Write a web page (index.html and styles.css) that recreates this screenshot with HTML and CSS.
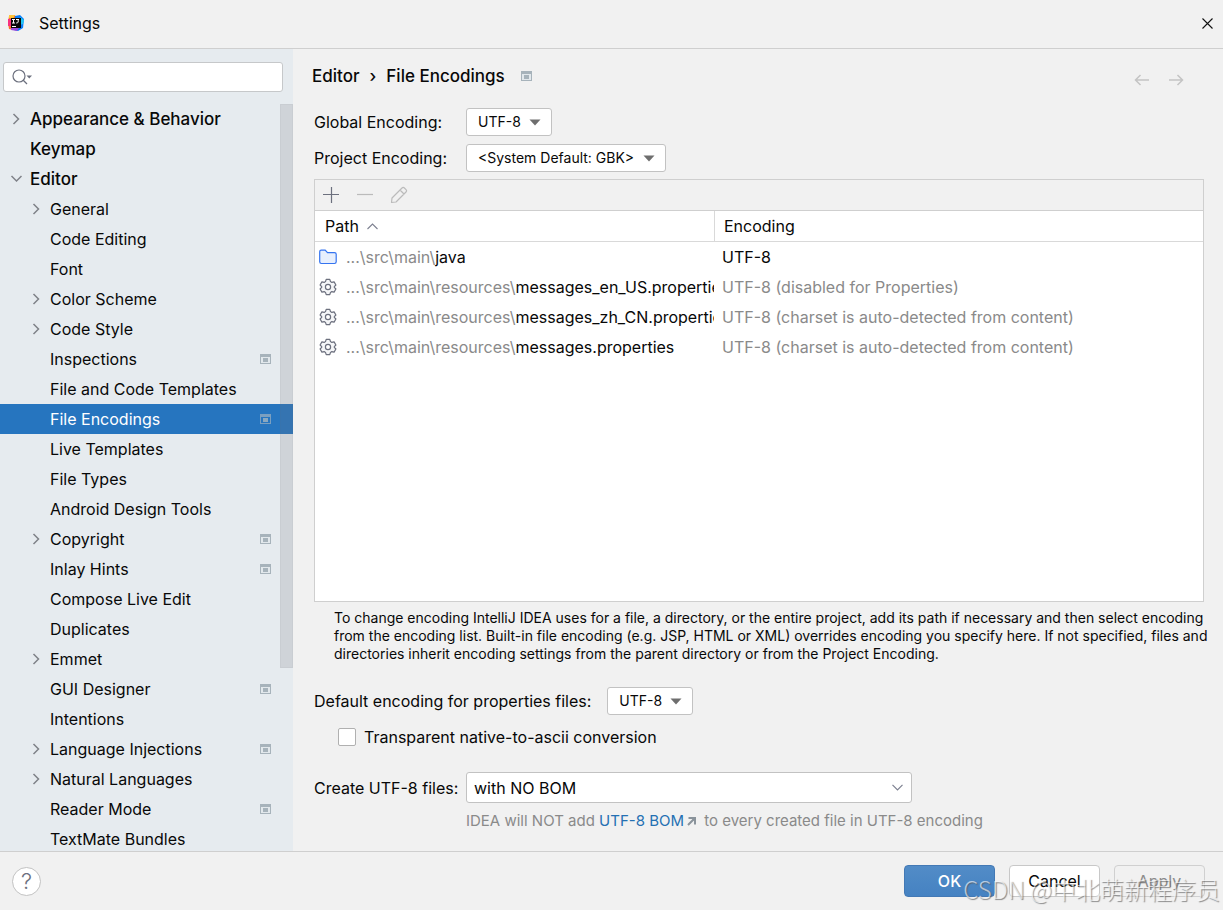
FILE: index.html
```html
<!DOCTYPE html>
<html lang="en">
<head>
<meta charset="utf-8">
<title>Settings</title>
<link rel="stylesheet" href="styles.css">
</head>
<body>
<svg class="sprite" aria-hidden="true">
  <symbol id="chevron-right" viewBox="0 0 12 12"><path d="M3.500 1l5 5-5 5" fill="none" stroke="#7f8288" stroke-width="1.500"/></symbol>
  <symbol id="chevron-down" viewBox="0 0 12 12"><path d="M1.500 3l5 5 5-5" fill="none" stroke="#7f8288" stroke-width="1.500"/></symbol>
  <symbol id="project" viewBox="0 0 11 10"><path d="M0 0h11v10H0z" fill="#a7b3bb"/><path d="M1 3h9v6H1z" fill="#e2e8ec"/><path d="M3 4h5v4H3z" fill="#a7b3bb"/></symbol>
  <symbol id="project-selected" viewBox="0 0 11 10"><path d="M0 0h11v10H0z" fill="#7a9fc0"/><path d="M1 3h9v6H1z" fill="#2675bf"/><path d="M3 4h5v4H3z" fill="#8aa8c0"/></symbol>
  <symbol id="triangle" viewBox="0 0 12 7"><path d="M0.500 0.500h11L6 6.500z" fill="#6e6e6e"/></symbol>
  <symbol id="gear" viewBox="0 0 18 18"><path d="M7.200 1.400h3.600l.7 2.200 1.300.8 2.300-.5 1.800 3.100-1.600 1.700v.6l1.600 1.700-1.800 3.100-2.300-.5-1.300.8-.7 2.200H7.200l-.7-2.200-1.300-.8-2.300.5L1.100 11l1.600-1.700v-.6L1.100 7l1.800-3.100 2.300.5 1.300-.8z" fill="#f5f6f8" stroke="#6c707e" stroke-width="1.200" stroke-linejoin="round"/><circle cx="9" cy="9" r="2.600" fill="#fff" stroke="#6c707e" stroke-width="1.200"/></symbol>
</svg>

<header class="titlebar">
  <svg class="logo" viewBox="0 0 16 16" aria-hidden="true">
    <path d="M1 1l6-1 2 8-4 7-4-1-1-6z" fill="#fc6a2b"/><path d="M1 0h6l-2 4-4-1z" fill="#ffc43a"/><path d="M0 4h4v7H0z" fill="#f8317f"/>
    <path d="M7 1l5-1 4 4-1 9-5 3-4-1z" fill="#087cfa"/><path d="M12 2l4 3-1 4-3 1z" fill="#20c5f5"/><path d="M3 13h8l-2 3-6-1z" fill="#9b48d8"/>
    <path d="M3 3h10v10H3z" fill="#080808"/><path d="M4 4.500h3M5.500 4.500v3.500M4 8h3M8 4.500h3M10.200 4.500v2.500q0 1-2 1M4 11.500h4" fill="none" stroke="#fff"/>
  </svg>
  <h1 class="title">Settings</h1>
  <button class="close" aria-label="Close"><svg width="11" height="11" viewBox="0 0 11 11"><path d="M.5.5l10 10M10.500.5l-10 10" stroke="#111" stroke-width="1.100"/></svg></button>
</header>

<div class="body">
  <aside class="sidebar">
    <label class="search">
      <svg width="22" height="16" viewBox="0 0 22 16"><circle cx="7" cy="7" r="6" fill="none" stroke="#6c707e" stroke-width="1.200"/><path d="M11 11l4 4" stroke="#6c707e" stroke-width="1.300"/><path d="M14.500 6.500h5.500l-2.700 3z" fill="#6c707e"/></svg>
      <input type="text" aria-label="Search settings">
    </label>
    <nav class="tree-area">
      <ul class="tree">
        <li class="row top"><svg class="arrow"><use href="#chevron-right"/></svg><span>Appearance &amp; Behavior</span></li>
        <li class="row top"><i class="arrow"></i><span>Keymap</span></li>
        <li class="row top"><svg class="arrow"><use href="#chevron-down"/></svg><span>Editor</span></li>
        <li class="row"><svg class="arrow"><use href="#chevron-right"/></svg><span>General</span></li>
        <li class="row"><i class="arrow"></i><span>Code Editing</span></li>
        <li class="row"><i class="arrow"></i><span>Font</span></li>
        <li class="row"><svg class="arrow"><use href="#chevron-right"/></svg><span>Color Scheme</span></li>
        <li class="row"><svg class="arrow"><use href="#chevron-right"/></svg><span>Code Style</span></li>
        <li class="row"><i class="arrow"></i><span>Inspections</span><svg class="mark"><use href="#project"/></svg></li>
        <li class="row"><i class="arrow"></i><span>File and Code Templates</span></li>
        <li class="row selected"><i class="arrow"></i><span>File Encodings</span><svg class="mark"><use href="#project-selected"/></svg></li>
        <li class="row"><i class="arrow"></i><span>Live Templates</span></li>
        <li class="row"><i class="arrow"></i><span>File Types</span></li>
        <li class="row"><i class="arrow"></i><span>Android Design Tools</span></li>
        <li class="row"><svg class="arrow"><use href="#chevron-right"/></svg><span>Copyright</span><svg class="mark"><use href="#project"/></svg></li>
        <li class="row"><i class="arrow"></i><span>Inlay Hints</span><svg class="mark"><use href="#project"/></svg></li>
        <li class="row"><i class="arrow"></i><span>Compose Live Edit</span></li>
        <li class="row"><i class="arrow"></i><span>Duplicates</span></li>
        <li class="row"><svg class="arrow"><use href="#chevron-right"/></svg><span>Emmet</span></li>
        <li class="row"><i class="arrow"></i><span>GUI Designer</span><svg class="mark"><use href="#project"/></svg></li>
        <li class="row"><i class="arrow"></i><span>Intentions</span></li>
        <li class="row"><svg class="arrow"><use href="#chevron-right"/></svg><span>Language Injections</span><svg class="mark"><use href="#project"/></svg></li>
        <li class="row"><svg class="arrow"><use href="#chevron-right"/></svg><span>Natural Languages</span></li>
        <li class="row"><i class="arrow"></i><span>Reader Mode</span><svg class="mark"><use href="#project"/></svg></li>
        <li class="row"><i class="arrow"></i><span>TextMate Bundles</span></li>
      </ul>
      <div class="scrollbar"></div>
    </nav>
  </aside>

  <main class="content">
    <div class="heading">
      <h2 class="crumbs"><span>Editor</span><span>›</span><span>File Encodings</span></h2>
      <svg class="mark"><use href="#project"/></svg>
      <div class="history">
        <button aria-label="Back" disabled><svg width="16" height="12" viewBox="0 0 16 12"><path d="M15 6H1.500M6.500 1l-5 5 5 5" fill="none" stroke="#c4c4c4" stroke-width="1.500"/></svg></button>
        <button aria-label="Forward" disabled><svg width="16" height="12" viewBox="0 0 16 12"><path d="M1 6h13.500M9.500 1l5 5-5 5" fill="none" stroke="#c4c4c4" stroke-width="1.500"/></svg></button>
      </div>
    </div>

    <div class="fields">
      <label for="global">Global Encoding:</label>
      <div class="picker"><select id="global"><option>UTF-8</option></select><svg><use href="#triangle"/></svg></div>
      <label for="project-enc">Project Encoding:</label>
      <div class="picker"><select id="project-enc"><option>&lt;System Default: GBK&gt;</option></select><svg><use href="#triangle"/></svg></div>
    </div>

    <section class="panel">
      <div class="toolbar">
        <button aria-label="Add"><svg width="18" height="18" viewBox="0 0 18 18"><path d="M9.500 1v16M1 8.500h16" stroke="#6c707e" stroke-width="1.200"/></svg></button>
        <button aria-label="Remove" disabled><svg width="18" height="18" viewBox="0 0 18 18"><path d="M1 8.500h16" stroke="#bbb" stroke-width="1.200"/></svg></button>
        <button aria-label="Edit" disabled><svg width="18" height="18" viewBox="0 0 18 18"><path d="M1.500 16.500l.5-4.500L12 2q1.200-1.200 2.400 0L16 3.600q1.200 1.200 0 2.400L6 16zM10 4l4 4" fill="none" stroke="#bbb" stroke-width="1.200" stroke-linejoin="round"/></svg></button>
      </div>
      <table class="encodings">
        <thead><tr>
          <th class="path-col">Path <svg width="11" height="7" viewBox="0 0 11 7"><path d="M.5 6l5-5 5 5" fill="none" stroke="#7d8090" stroke-width="1.100"/></svg></th>
          <th>Encoding</th>
        </tr></thead>
        <tbody>
          <tr><td><div class="file"><svg class="icon" viewBox="0 0 18 18"><path d="M.7 3.700q0-1.500 1.500-1.500h4l2.300 2.500h7q1.700 0 1.700 1.600v7.500q0 1.700-1.700 1.700H2.300q-1.600 0-1.600-1.700z" fill="#e7effd" stroke="#3574f0" stroke-width="1.200"/></svg><span><span class="dim">...\src\main\</span>java</span></div></td><td>UTF-8</td></tr>
          <tr><td><div class="file"><svg class="icon"><use href="#gear"/></svg><span><span class="dim">...\src\main\resources\</span>messages_en_US.properties</span></div></td><td class="dim">UTF-8 (disabled for Properties)</td></tr>
          <tr><td><div class="file"><svg class="icon"><use href="#gear"/></svg><span><span class="dim">...\src\main\resources\</span>messages_zh_CN.properties</span></div></td><td class="dim">UTF-8 (charset is auto-detected from content)</td></tr>
          <tr><td><div class="file"><svg class="icon"><use href="#gear"/></svg><span><span class="dim">...\src\main\resources\</span>messages.properties</span></div></td><td class="dim">UTF-8 (charset is auto-detected from content)</td></tr>
        </tbody>
      </table>
    </section>

    <p class="note">To change encoding IntelliJ IDEA uses for a file, a directory, or the entire project, add its path if necessary and then select encoding from the encoding list. Built-in file encoding (e.g. JSP, HTML or XML) overrides encoding you specify here. If not specified, files and directories inherit encoding settings from the parent directory or from the Project Encoding.</p>

    <div class="default-row">
      <label for="props">Default encoding for properties files:</label>
      <div class="picker"><select id="props"><option>UTF-8</option></select><svg><use href="#triangle"/></svg></div>
    </div>
    <label class="check"><input type="checkbox"><span>Transparent native-to-ascii conversion</span></label>

    <div class="create">
      <label for="bom">Create UTF-8 files:</label>
      <div class="combo"><select id="bom"><option>with NO BOM</option></select><svg width="11" height="7" viewBox="0 0 11 7"><path d="M.5.8l5 5 5-5" fill="none" stroke="#7d8090" stroke-width="1.200"/></svg></div>
      <p class="hint">IDEA will NOT add <a href="#bom">UTF-8 BOM<svg width="9" height="9" viewBox="0 0 9 9"><path d="M1.500 1H8v6.500M8 1L1 8" fill="none" stroke="#8a939b" stroke-width="2"/><path d="M4 1h4v4z" fill="#8a939b"/></svg></a> to every created file in UTF-8 encoding</p>
    </div>
  </main>
</div>

<footer class="footer">
  <button class="help" aria-label="Help">?</button>
  <div class="actions">
    <button class="btn primary">OK</button>
    <button class="btn">Cancel</button>
    <button class="btn" disabled>Apply</button>
  </div>
  <div class="watermark">CSDN @中北萌新程序员</div>
</footer>
</body>
</html>
```

FILE: styles.css
```css
* { box-sizing: border-box; }
body {
  margin: 0;
  height: 100vh;
  display: flex;
  flex-direction: column;
  overflow: hidden;
  background: #f1f1f1;
  color: #080808;
  font: 16px/20px Inter, "Noto Sans CJK SC", sans-serif;
}
h1, h2, p, ul { margin: 0; padding: 0; }
button, input, select { font: inherit; color: inherit; margin: 0; }
button { padding: 0; border: 0; background: none; }
svg { flex: none; display: block; }
.sprite { display: none; }

.titlebar {
  display: flex;
  align-items: center;
  height: 49px;
  flex: none;
  padding: 0 10px 2px 8px;
  border-bottom: 1px solid #cfcfcf;
}
.logo { width: 16px; height: 16px; }
.title { margin-left: 15px; font-size: 16px; font-weight: 400; }
.close { margin-left: auto; }

.body { flex: 1; display: flex; min-height: 0; }
.sidebar {
  width: 293px;
  flex: none;
  display: flex;
  flex-direction: column;
  background: #e6ebef;
}
.search {
  display: flex;
  align-items: center;
  flex: none;
  height: 30px;
  margin: 13px 10px 12px 3px;
  padding-left: 8px;
  background: #fff;
  border: 1px solid #c6c8ca;
  border-radius: 3px;
}
.search input { flex: 1; min-width: 0; border: 0; outline: 0; background: none; }
.tree-area { position: relative; flex: 1; min-height: 0; overflow: hidden; }
.tree { list-style: none; }
.row { display: flex; align-items: center; height: 30px; padding: 0 22px 0 30px; }
.row.top { padding-left: 10px; font-size: 17px; font-weight: 500; }
.arrow { width: 12px; height: 12px; margin-right: 8px; flex: none; }
.mark { width: 11px; height: 10px; }
.row .mark { margin-left: auto; }
.selected { background: #2675bf; color: #fff; }
.scrollbar {
  position: absolute;
  top: 0;
  right: 0;
  width: 13px;
  height: 564px;
  background: rgba(115, 115, 125, 0.2);
  border: 1px solid rgba(89, 89, 89, 0.05);
}

.content {
  flex: 1;
  min-width: 0;
  display: flex;
  flex-direction: column;
  padding: 12px 19px 20px 21px;
}
.heading { display: flex; align-items: center; height: 30px; flex: none; margin-left: -2px; }
.crumbs { display: flex; gap: 10px; font-size: 17px; font-weight: 500; margin-right: 16px; }
.history { display: flex; gap: 18px; margin: 7px 20px 0 auto; }

.fields {
  display: grid;
  grid-template-columns: 152px auto;
  justify-content: start;
  justify-items: start;
  align-items: center;
  gap: 8px 0;
  margin: 17px 0 7px;
}
.picker, .combo { display: grid; align-items: center; }
.picker > *, .combo > * { grid-area: 1 / 1; }
.picker svg, .combo svg { justify-self: end; pointer-events: none; }
select { appearance: none; outline: 0; background: #fff; border: 1px solid #c2c2c2; border-radius: 3px; }
.picker select { height: 28px; padding: 0 30px 0 11px; font-size: 14px; }
.picker svg { width: 12px; height: 7px; margin-right: 11px; }

.panel {
  flex: 1;
  min-height: 0;
  border: 1px solid #cfcfcf;
  background: #fff;
  overflow: hidden;
}
.toolbar {
  display: flex;
  align-items: center;
  gap: 16px;
  height: 31px;
  padding-left: 7px;
  background: #f1f1f1;
  border-bottom: 1px solid #cfcfcf;
}
.encodings { width: 100%; table-layout: fixed; border-collapse: separate; border-spacing: 0; }
.encodings th {
  height: 31px;
  padding: 0 9px;
  text-align: left;
  font-weight: 400;
  border-bottom: 1px solid #d9d9d9;
}
.encodings .path-col { width: 400px; padding-left: 10px; border-right: 1px solid #d9d9d9; }
.path-col svg { display: inline-block; vertical-align: middle; margin: 0 0 2px 4px; }
.encodings td { height: 30px; padding: 0 0 0 7px; white-space: nowrap; overflow: hidden; }
.encodings td:first-child { padding: 0 1px 0 4px; }
.file { display: flex; align-items: center; gap: 9px; overflow: hidden; }
.icon { width: 18px; height: 18px; }
.dim { color: #8a8a8a; }

.note { margin: 7px -12px 0 20px; font-size: 14px; line-height: 18px; }
.default-row { display: flex; align-items: center; gap: 16px; margin-top: 24px; }
.check { display: flex; align-items: center; gap: 8px; margin: 12px 0 0 24px; }
.check input {
  appearance: none;
  width: 18px;
  height: 18px;
  background: #fff;
  border: 1px solid #b0b0b0;
  border-radius: 2px;
}
.create {
  display: grid;
  grid-template-columns: 152px minmax(0, 446px) 1fr;
  align-items: center;
  row-gap: 8px;
  margin-top: 25px;
}
.combo select { width: 100%; height: 31px; padding: 0 7px; }
.combo svg { margin-right: 9px; }
.hint { grid-column: 2 / 4; color: #8a8a8a; font-size: 15px; }
.hint a { color: #2470b3; text-decoration: none; }
.hint svg { display: inline-block; margin: 0 4px 0 3px; }

.footer {
  position: relative;
  flex: none;
  display: flex;
  align-items: center;
  justify-content: space-between;
  height: 59px;
  padding: 0 18px 0 12px;
  border-top: 1px solid #cfcfcf;
}
.help {
  width: 29px;
  height: 29px;
  border: 1px solid #c2c2c2;
  border-radius: 50%;
  background: #fff;
  color: #6c707e;
  font-size: 22px;
  font-weight: 300;
}
.actions { display: flex; gap: 14px; }
.btn {
  width: 91px;
  height: 32px;
  background: #fff;
  border: 1px solid #c8c8c8;
  border-radius: 4px;
}
.btn:disabled { background: none; color: #8c8c8c; border-color: #d0d0d0; }
.primary { background: linear-gradient(#528cc7, #4582c2); border-color: #4379b5; color: #fff; font-weight: 500; }
.watermark {
  position: absolute;
  right: 3px;
  bottom: 5px;
  font: 24px/32px "Noto Sans CJK SC", sans-serif;
  font-weight: 300;
  color: rgba(255, 255, 255, 0.6);
  text-shadow: 1px 1px 1px rgba(90, 90, 90, 0.7);
  pointer-events: none;
  white-space: nowrap;
}
```
